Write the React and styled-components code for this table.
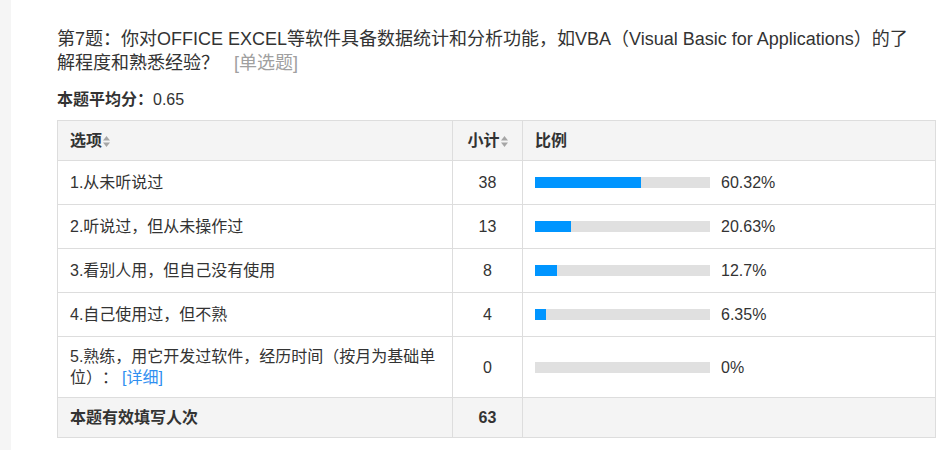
import React from "react";
import styled, { createGlobalStyle } from "styled-components";

const GlobalStyle = createGlobalStyle`
  body {
    margin: 0;
    background: #ffffff;
    font-family: "Liberation Sans", Arial, "Noto Sans CJK SC", sans-serif;
    color: #333333;
    text-spacing-trim: space-all;
  }
`;

const Page = styled.div`
  display: flex;
  flex-direction: row;
  width: 950px;
  height: 450px;
  overflow: hidden;
`;

const SideStrip = styled.div`
  width: 11px;
  flex: 0 0 11px;
  background-color: #f5f5f5;
`;

const Content = styled.div`
  display: flex;
  flex-direction: column;
  padding: 27px 0 0 46px;
  width: 879px;
`;

const Title = styled.div`
  font-size: 18px;
  line-height: 24px;
  color: #333333;
`;

const TypeTag = styled.span`
  color: #a0a0a0;
  margin-left: 15px;
`;

const Average = styled.div`
  margin-top: 15px;
  font-size: 16px;
  line-height: 20px;
`;

const AverageLabel = styled.span`
  font-weight: 700;
`;

const Table = styled.table`
  margin-top: 10px;
  width: 879px;
  border-collapse: collapse;
  table-layout: fixed;
  font-size: 16px;
  line-height: 21px;
`;

const HeadCell = styled.th`
  background-color: #f4f4f4;
  border: 1px solid #dddddd;
  padding: 9px 12px;
  font-weight: 700;
  text-align: ${(p) => (p.$center ? "center" : "left")};
  color: #333333;
`;

const Cell = styled.td`
  border: 1px solid #dddddd;
  padding: ${(p) => (p.$tight ? "9px 12px" : "11px 12px")};
  text-align: ${(p) => (p.$center ? "center" : "left")};
  vertical-align: middle;
  background-color: ${(p) => (p.$foot ? "#f4f4f4" : "#ffffff")};
  font-weight: ${(p) => (p.$foot ? 700 : 400)};
`;

const SortIcon = styled.svg`
  width: 7px;
  height: 11px;
  margin-left: 1px;
  vertical-align: -1px;
`;

const BarWrap = styled.div`
  display: flex;
  align-items: center;
`;

const Track = styled.div`
  width: 175px;
  height: 11px;
  background-color: #e0e0e0;
  flex: 0 0 175px;
`;

const Fill = styled.div`
  height: 100%;
  background-color: #0095ff;
`;

const Percent = styled.span`
  margin-left: 11px;
`;

const DetailLink = styled.a`
  color: #2f8ff0;
  text-decoration: none;
  margin-left: 4px;
`;

const Sort = () => (
  <SortIcon viewBox="0 0 7 11">
    <path d="M3.5 0 L7 4.5 L0 4.5 Z" fill="#a6a6a6" />
    <path d="M3.5 11 L7 6.5 L0 6.5 Z" fill="#a6a6a6" />
  </SortIcon>
);

const rows = [
  { label: "1.从未听说过", count: 38, pct: 60.32, text: "60.32%" },
  { label: "2.听说过，但从未操作过", count: 13, pct: 20.63, text: "20.63%" },
  { label: "3.看别人用，但自己没有使用", count: 8, pct: 12.7, text: "12.7%" },
  { label: "4.自己使用过，但不熟", count: 4, pct: 6.35, text: "6.35%" },
];

export default function App() {
  return (
    <>
      <GlobalStyle />
      <Page>
        <SideStrip />
        <Content>
          <Title>
            第7题：你对OFFICE EXCEL等软件具备数据统计和分析功能，如VBA（Visual Basic for Applications）的了
            <br />
            解程度和熟悉经验？
            <TypeTag>[单选题]</TypeTag>
          </Title>
          <Average>
            <AverageLabel>本题平均分：</AverageLabel>0.65
          </Average>
          <Table>
            <colgroup>
              <col style={{ width: "395px" }} />
              <col style={{ width: "70px" }} />
              <col />
            </colgroup>
            <thead>
              <tr>
                <HeadCell>
                  选项<Sort />
                </HeadCell>
                <HeadCell $center>
                  小计<Sort />
                </HeadCell>
                <HeadCell>比例</HeadCell>
              </tr>
            </thead>
            <tbody>
              {rows.map((r) => (
                <tr key={r.label}>
                  <Cell>{r.label}</Cell>
                  <Cell $center>{r.count}</Cell>
                  <Cell>
                    <BarWrap>
                      <Track>
                        <Fill style={{ width: `${r.pct}%` }} />
                      </Track>
                      <Percent>{r.text}</Percent>
                    </BarWrap>
                  </Cell>
                </tr>
              ))}
              <tr>
                <Cell $tight>
                  5.熟练，用它开发过软件，经历时间（按月为基础单位）：
                  <DetailLink href="#">[详细]</DetailLink>
                </Cell>
                <Cell $center>0</Cell>
                <Cell>
                  <BarWrap>
                    <Track>
                      <Fill style={{ width: "0%" }} />
                    </Track>
                    <Percent>0%</Percent>
                  </BarWrap>
                </Cell>
              </tr>
              <tr>
                <Cell $foot $tight>本题有效填写人次</Cell>
                <Cell $foot $tight $center>63</Cell>
                <Cell $foot $tight></Cell>
              </tr>
            </tbody>
          </Table>
        </Content>
      </Page>
    </>
  );
}
